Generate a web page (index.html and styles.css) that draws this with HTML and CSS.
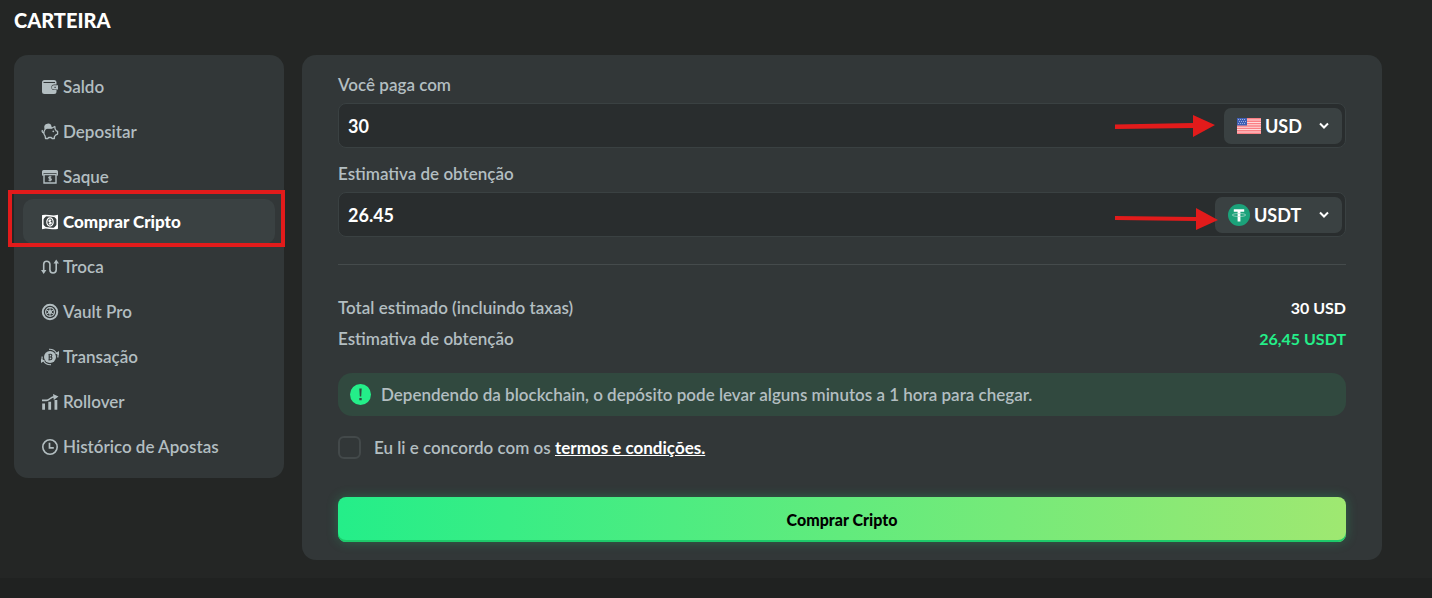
FILE: index.html
```html
<!DOCTYPE html>
<html lang="pt-BR">
<head>
  <meta charset="UTF-8">
  <meta name="viewport" content="width=device-width, initial-scale=1">
  <title>Carteira</title>
  <link rel="stylesheet" href="styles.css">
</head>
<body>
<main class="page">
  <h1>CARTEIRA</h1>

  <div class="wallet">
    <!-- Menu lateral -->
    <nav class="menu">
      <a href="#" class="menu-item">
        <svg class="icon" viewBox="0 0 18 18"><path fill="currentColor" fill-rule="evenodd" d="M3.500 2h9.500a2.500 2.500 0 0 1 2.500 2.500v2h-2.300a2.800 2.800 0 0 0 0 5.600h2.300v1.400A2.500 2.500 0 0 1 13 16H3.500A2.500 2.500 0 0 1 1 13.500v-9A2.500 2.500 0 0 1 3.500 2zM2.500 4v1h11.500V4z"/><path fill="currentColor" fill-rule="evenodd" d="M12.900 7.300H17v4.200h-4.100a2.100 2.100 0 0 1 0-4.200zm.6 1.500v1.200h1.200V8.800z"/></svg>
        Saldo
      </a>
      <a href="#" class="menu-item">
        <svg class="icon" viewBox="0 0 18 18"><path fill="none" stroke="currentColor" stroke-width="1.300" stroke-linejoin="round" d="M6 5h5l2.800-1.500.3 2.500 1.200 1.800 1.300.5v2.800l-1.700.8-1.500 1.700v1.900h-2.500l-.5-1H7.500l-.5 1H4.500l-.3-2.200A5.200 5.200 0 0 1 6 5zM2.500 10C1 9.500.9 8 1.500 7"/><path fill="currentColor" d="M3.300 5a3.600 3.600 0 0 1 7.300-1.300l.5 1.500H6L3.600 6.600z"/><circle cx="12.300" cy="8.300" r=".9" fill="currentColor"/></svg>
        Depositar
      </a>
      <a href="#" class="menu-item">
        <svg class="icon" viewBox="0 0 18 18"><path fill="currentColor" d="M2.500 2h13A1.500 1.500 0 0 1 17 3.500v3A1.500 1.500 0 0 1 15.500 8V5h-13v3A1.500 1.500 0 0 1 1 6.500v-3A1.500 1.500 0 0 1 2.500 2z"/><path fill="none" stroke="currentColor" stroke-width="1.400" d="M3 6.500h12V15H3z"/><path fill="none" stroke="currentColor" stroke-width="1.100" d="M10.400 9.200c-.8-.8-2.800-.6-2.700.5.100 1.200 2.700.6 2.700 1.800 0 1.100-2 1.200-2.900.4M9 7.800v5.600"/></svg>
        Saque
      </a>
      <a href="#" class="menu-item active" aria-current="page">
        <svg class="icon" viewBox="0 0 18 18"><path fill="none" stroke="currentColor" stroke-width="1.500" d="M1.800 2.800c4-1.400 9 1.600 14.400 0v12.400c-5 1.400-10-1.600-14.400 0z"/><path fill="currentColor" d="M1.500 3h3.800L1.500 7zm15 12h-3.800l3.800-4zM1.500 15v-4l3.800 3.500zm15-12v4l-3.800-3.500z"/><ellipse cx="9" cy="9" rx="3.200" ry="4.200" fill="none" stroke="currentColor" stroke-width="1.200"/><path fill="none" stroke="currentColor" stroke-width="1.100" d="M10.300 7.500c-.8-.7-2.400-.5-2.400.4 0 1.200 2.400.9 2.400 2.100 0 .9-1.700 1-2.500.3M9 6.200v5.600"/></svg>
        Comprar Cripto
        <span class="highlight"></span>
      </a>
      <a href="#" class="menu-item">
        <svg class="icon" viewBox="0 0 18 18"><path fill="none" stroke="currentColor" stroke-width="1.600" d="M2.700 13V6.300a3.100 3.100 0 0 1 6.200 0v5.500a3.100 3.100 0 0 0 6.300 0V4.500"/><path fill="currentColor" d="M0 12h5.400l-2.700 4zM12.500 5.500L15.200 1.500 18 5.500z"/></svg>
        Troca
      </a>
      <a href="#" class="menu-item">
        <svg class="icon" viewBox="0 0 18 18"><g fill="none" stroke="currentColor"><circle cx="9" cy="9" r="7.200" stroke-width="2"/><circle cx="9" cy="9" r="4.400" stroke-width="1.300"/><path stroke-width="1" d="M9 4.500v9M5.100 6.700l7.800 4.600M5.100 11.300l7.800-4.600"/></g><circle cx="9" cy="9" r="2" fill="currentColor"/></svg>
        Vault Pro
      </a>
      <a href="#" class="menu-item">
        <svg class="icon" viewBox="0 0 18 18"><circle cx="9" cy="9" r="6" fill="currentColor"/><path fill="none" stroke="#323738" stroke-width="1.100" d="M7.500 6.500l1.900-.2c2-.1 1.700 2.500 0 2.700H8m1.400 0c2.200-.1 2 2.700-.1 2.800l-1.800.1M8.200 6.400v5.400"/><path fill="none" stroke="currentColor" stroke-width="1.200" d="M8 1.300a8 8 0 0 1 7.500 4M16.700 9.500a8 8 0 0 0 .2-4M10 16.700a8 8 0 0 1-7.500-4M1.300 8.500a8 8 0 0 0-.2 4"/><path fill="currentColor" d="M14 5.500L18 3v4zM4 12.500L0 15v-4z"/></svg>
        Transação
      </a>
      <a href="#" class="menu-item">
        <svg class="icon" viewBox="0 0 18 18"><path fill="currentColor" d="M1.200 10.500H4v6.300H1.200zM7.300 8.800h2.800v8H7.300zM13.500 7h2.800v9.800h-2.800zM12 1l5.500 2.600L12.800 7z"/><path fill="none" stroke="currentColor" stroke-width="1.600" d="M1 7.400h4.500c3 0 4-3.700 8-3.700"/></svg>
        Rollover
      </a>
      <a href="#" class="menu-item">
        <svg class="icon" viewBox="0 0 18 18"><circle cx="9" cy="9" r="7.200" fill="none" stroke="currentColor" stroke-width="1.600"/><path fill="none" stroke="currentColor" stroke-width="1.700" d="M8.500 4.800v5h4.300"/></svg>
        Histórico de Apostas
      </a>
    </nav>

    <!-- Compra de cripto -->
    <form class="panel">
      <label class="label" for="pay">Você paga com</label>
      <div class="field">
        <input type="text" id="pay" class="amount" value="30">
        <div class="currency">
          <svg class="flag" viewBox="0 0 24 16"><path fill="#ffd9d9" d="M0 0h24v16H0z"/><path stroke="#fa7f84" stroke-width="1.400" d="M0 .8h24M0 3.200h24M0 5.600h24M0 8h24M0 10.400h24M0 12.800h24M0 15.200h24"/><path fill="#3f5fb5" d="M0 0h10v7.500H0z"/><path stroke="#9fb0dd" stroke-width="1" stroke-dasharray="1 1" d="M1 1.500h8M2 3.500h7M1 5.500h8"/></svg>
          <select class="select-usd" aria-label="Moeda de pagamento"><option>USD</option></select>
          <svg class="chevron" viewBox="0 0 10 10"><path d="M1 2.500l4 4 4-4"/></svg>
        </div>
        <svg class="arrow arrow-usd" viewBox="0 0 100 22"><path fill="#e21b1b" d="M0 9.500L78 8V0l22 10-22 12v-9L0 14z"/></svg>
      </div>

      <label class="label" for="get">Estimativa de obtenção</label>
      <div class="field">
        <input type="text" id="get" class="amount" value="26.45">
        <div class="currency">
          <svg class="tether" viewBox="0 0 22 22"><circle cx="11" cy="11" r="11" fill="#1ba27a"/><path fill="#fff" d="M5.800 5.200h10.400v2.500h-3.800V17.500H9.600V7.700H5.800z"/><ellipse cx="11" cy="11" rx="6.800" ry="1.500" fill="none" stroke="#b5e0d2" stroke-width=".7"/></svg>
          <select class="select-usdt" aria-label="Criptomoeda"><option>USDT</option></select>
          <svg class="chevron" viewBox="0 0 10 10"><path d="M1 2.500l4 4 4-4"/></svg>
        </div>
        <svg class="arrow arrow-usdt" viewBox="0 0 103 22"><path fill="#e21b1b" d="M0 8l81 1V0l22 12-22 10v-9L0 12z"/></svg>
      </div>

      <hr>

      <dl class="summary">
        <div><dt>Total estimado (incluindo taxas)</dt><dd>30 USD</dd></div>
        <div><dt>Estimativa de obtenção</dt><dd class="green">26,45 USDT</dd></div>
      </dl>

      <p class="notice">
        <svg viewBox="0 0 21 21"><circle cx="10.500" cy="10.500" r="10.500" fill="#24ee89"/><path fill="#31493f" d="M9.300 4.500h2.400l-.5 8h-1.400zM9.300 14h2.400v2.300H9.300z"/></svg>
        Dependendo da blockchain, o depósito pode levar alguns minutos a 1 hora para chegar.
      </p>

      <div class="terms">
        <input type="checkbox" id="agree">
        <label for="agree">Eu li e concordo com os <a href="#">termos e condições.</a></label>
      </div>

      <button type="submit" class="buy">Comprar Cripto</button>
    </form>
  </div>
</main>
<footer class="footer"></footer>
</body>
</html>
```
FILE: styles.css
```css
* {
  box-sizing: border-box;
}

body {
  margin: 0;
  min-height: 100vh;
  display: flex;
  flex-direction: column;
  background-color: #242625;
  color: #b3bec1;
  font-family: Lato, "Open Sans", sans-serif;
  font-size: 17px;
  font-weight: 600;
  line-height: 20px;
}

.page {
  padding: 8px 50px 18px 14px;
}

h1 {
  margin: 0 0 23px;
  color: #fff;
  font-size: 20px;
  font-weight: 900;
  line-height: 24px;
}

.wallet {
  display: flex;
  align-items: flex-start;
  gap: 18px;
}

/* Menu lateral */
.menu {
  flex: 0 0 270px;
  padding: 9px;
  border-radius: 14px;
  background-color: #323738;
}

.menu-item {
  position: relative;
  display: flex;
  align-items: center;
  gap: 4px;
  height: 45px;
  padding: 0 18px;
  border-radius: 10px;
  color: inherit;
  text-decoration: none;
}

.menu-item.active {
  background-color: #3a4142;
  color: #fff;
  font-weight: 900;
}

.icon {
  width: 18px;
  height: 18px;
}

/* Destaque em volta do item ativo */
.highlight {
  position: absolute;
  inset: -9px -10px -3px -15px;
  border: 4px solid #e21b1b;
}

/* Painel de compra */
.panel {
  flex: 1;
  min-width: 0;
  padding: 20px 36px 18px;
  border-radius: 14px;
  background-color: #323738;
}

.label {
  display: block;
  margin-bottom: 8px;
}

.field {
  position: relative;
  display: flex;
  align-items: center;
  height: 45px;
  margin-bottom: 16px;
  padding-right: 3px;
  border: 1px solid #3a4142;
  border-radius: 8px;
  background-color: #292d2e;
}

.amount {
  flex: 1;
  min-width: 0;
  padding: 0 9px;
  border: 0;
  background: none;
  color: #fff;
  font: inherit;
  font-size: 18px;
  font-weight: 700;
}

.currency {
  display: flex;
  align-items: center;
  gap: 4px;
  height: 36px;
  padding: 0 13px;
  border-radius: 7px;
  background-color: #3a4142;
}

.currency select {
  appearance: none;
  padding: 0;
  border: 0;
  background: none;
  color: #fff;
  font: inherit;
  font-size: 18px;
  font-weight: 700;
}

.select-usd {
  width: 50px;
}

.select-usdt {
  width: 61px;
}

.flag {
  width: 24px;
  height: 16px;
}

.tether {
  width: 22px;
  height: 22px;
}

.chevron {
  width: 10px;
  height: 10px;
  fill: none;
  stroke: #fff;
  stroke-width: 2px;
}

.arrow {
  position: absolute;
  height: 22px;
  pointer-events: none;
}

.arrow-usd {
  right: 130px;
  width: 100px;
}

.arrow-usdt {
  right: 127px;
  top: 15px;
  width: 103px;
}

hr {
  margin: 27px 0 33px;
  border: 0;
  border-top: 1px solid #454b4c;
}

.summary {
  margin: 0 0 24px;
}

.summary div {
  display: flex;
  justify-content: space-between;
  margin-bottom: 11px;
}

.summary dd {
  margin: 0;
  color: #fff;
  font-size: 16px;
  font-weight: 700;
}

.summary .green {
  color: #24ee89;
}

.notice {
  display: flex;
  align-items: center;
  gap: 10px;
  min-height: 43px;
  margin: 0 0 20px;
  padding: 0 12px;
  border-radius: 14px;
  background-color: #31493f;
}

.notice svg {
  flex: none;
  width: 21px;
  height: 21px;
}

.terms {
  display: flex;
  align-items: center;
  gap: 13px;
  margin-bottom: 38px;
}

.terms input {
  appearance: none;
  width: 23px;
  height: 23px;
  margin: 0;
  border: 2px solid #43494a;
  border-radius: 6px;
}

.terms a {
  color: #fff;
  font-weight: 700;
}

.buy {
  display: block;
  width: 100%;
  height: 45px;
  border: 0;
  border-radius: 8px;
  background: linear-gradient(90deg, #24ee89, #9fe871);
  box-shadow: 0 0 12px rgba(35, 238, 136, 0.25), inset 0 -2px #1dca6a;
  color: #000;
  font: inherit;
  font-size: 16px;
  font-weight: 900;
}

.footer {
  flex: 1;
  background-color: #202221;
}
```
